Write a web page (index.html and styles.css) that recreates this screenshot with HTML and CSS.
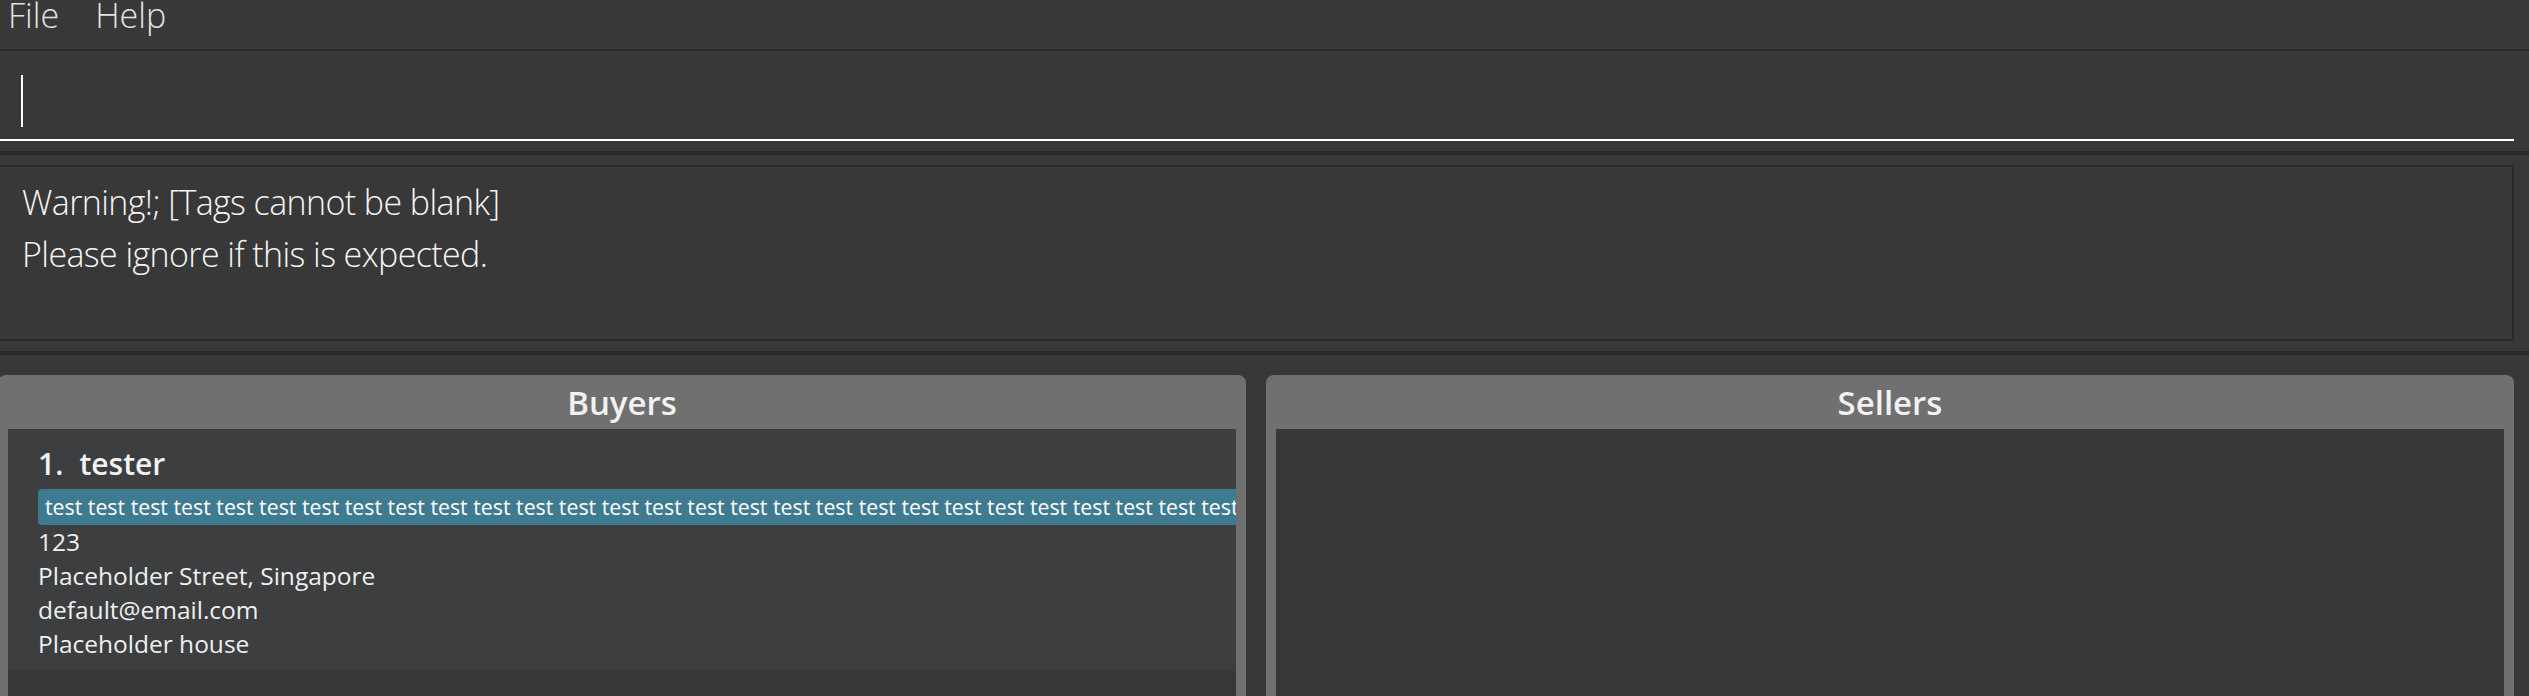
FILE: index.html
```html
<!DOCTYPE html>
<html lang="en">
<head>
<meta charset="utf-8">
<title>Address Book</title>
<link rel="stylesheet" href="styles.css">
</head>
<body>
<div class="app">
  <nav class="menubar">
    <span class="menu-item">File</span>
    <span class="menu-item">Help</span>
  </nav>
  <section class="command">
    <div class="command-box"><span class="caret"></span></div>
  </section>
  <section class="result">
    <div class="result-box">
      <p class="result-line">Warning!; [Tags cannot be blank]</p>
      <p class="result-line">Please ignore if this is expected.</p>
    </div>
  </section>
  <section class="lists">
    <div class="panel">
      <div class="panel-title">Buyers</div>
      <div class="panel-list">
        <div class="card">
          <div class="name-row"><span class="card-id">1.</span><span class="card-name">tester</span></div>
          <div class="tags"><span class="tag">test test test test test test test test test test test test test test test test test test test test test test test test test test test test test test test test test test test test test test test test</span></div>
          <p class="detail">123</p>
          <p class="detail">Placeholder Street, Singapore</p>
          <p class="detail">default@email.com</p>
          <p class="detail">Placeholder house</p>
        </div>
      </div>
    </div>
    <div class="panel">
      <div class="panel-title">Sellers</div>
      <div class="panel-list"></div>
    </div>
  </section>
</div>
</body>
</html>
```
FILE: styles.css
```css
html, body {
  margin: 0;
  padding: 0;
}

body {
  background: #383838;
  width: 2529px;
  height: 696px;
  overflow: hidden;
  font-family: "Open Sans", "Noto Sans", sans-serif;
  color: #f0f0f0;
}

.app {
  margin-left: -2px;
  width: 2531px;
}

/* menu bar */
.menubar {
  height: 49px;
  display: flex;
  align-items: flex-start;
  gap: 36px;
  padding-left: 10px;
  border-bottom: 2px solid #2a2a2a;
}

.menu-item {
  font-size: 34px;
  font-weight: 300;
  line-height: 30px;
  color: #e2e2e2;
}

/* command box */
.command {
  padding: 0 15px 10px 0;
  border-bottom: 4px solid #2a2a2a;
}

.command-box {
  height: 64px;
  padding: 24px 0 0 23px;
  border-bottom: 2px solid #ffffff;
}

.caret {
  display: block;
  width: 2px;
  height: 52px;
  background: #ffffff;
}

/* result display */
.result {
  padding: 10px 15px 10px 0;
  border-bottom: 4px solid #2a2a2a;
}

.result-box {
  height: 163px;
  border: 2px solid #2a2a2a;
  padding: 9px 0 0 22px;
}

.result-line {
  margin: 0;
  font-size: 34px;
  font-weight: 300;
  letter-spacing: -0.6px;
  line-height: 52px;
  color: #f4f4f4;
}

/* buyer / seller panels */
.lists {
  display: flex;
  gap: 20px;
  padding: 20px 15px 0 0;
}

.panel {
  flex: 1 1 0;
  min-width: 0;
  height: 330px;
  display: flex;
  flex-direction: column;
  background: #707070;
  border-radius: 8px 8px 0 0;
  padding: 0 10px;
}

.panel-title {
  height: 54px;
  line-height: 56px;
  text-align: center;
  font-size: 33px;
  font-weight: 600;
  color: #f2f2f2;
}

.panel-list {
  flex: 1;
  min-width: 0;
  background: #383838;
  overflow: hidden;
}

.card {
  background: #3c3e3f;
  padding: 15px 0 10px 30px;
  overflow: hidden;
}

.name-row {
  display: flex;
  gap: 16px;
  font-size: 30px;
  font-weight: 600;
  line-height: 40px;
  color: #f2f2f2;
}

.tags {
  display: flex;
  margin-top: 5px;
}

.tag {
  display: block;
  white-space: nowrap;
  background: #3e7b91;
  border-radius: 4px;
  padding: 0 7px;
  height: 36px;
  line-height: 36px;
  font-size: 21.3px;
  color: #ffffff;
}

.detail {
  margin: 0;
  font-size: 24.5px;
  line-height: 34px;
  color: #efefef;
}
```
